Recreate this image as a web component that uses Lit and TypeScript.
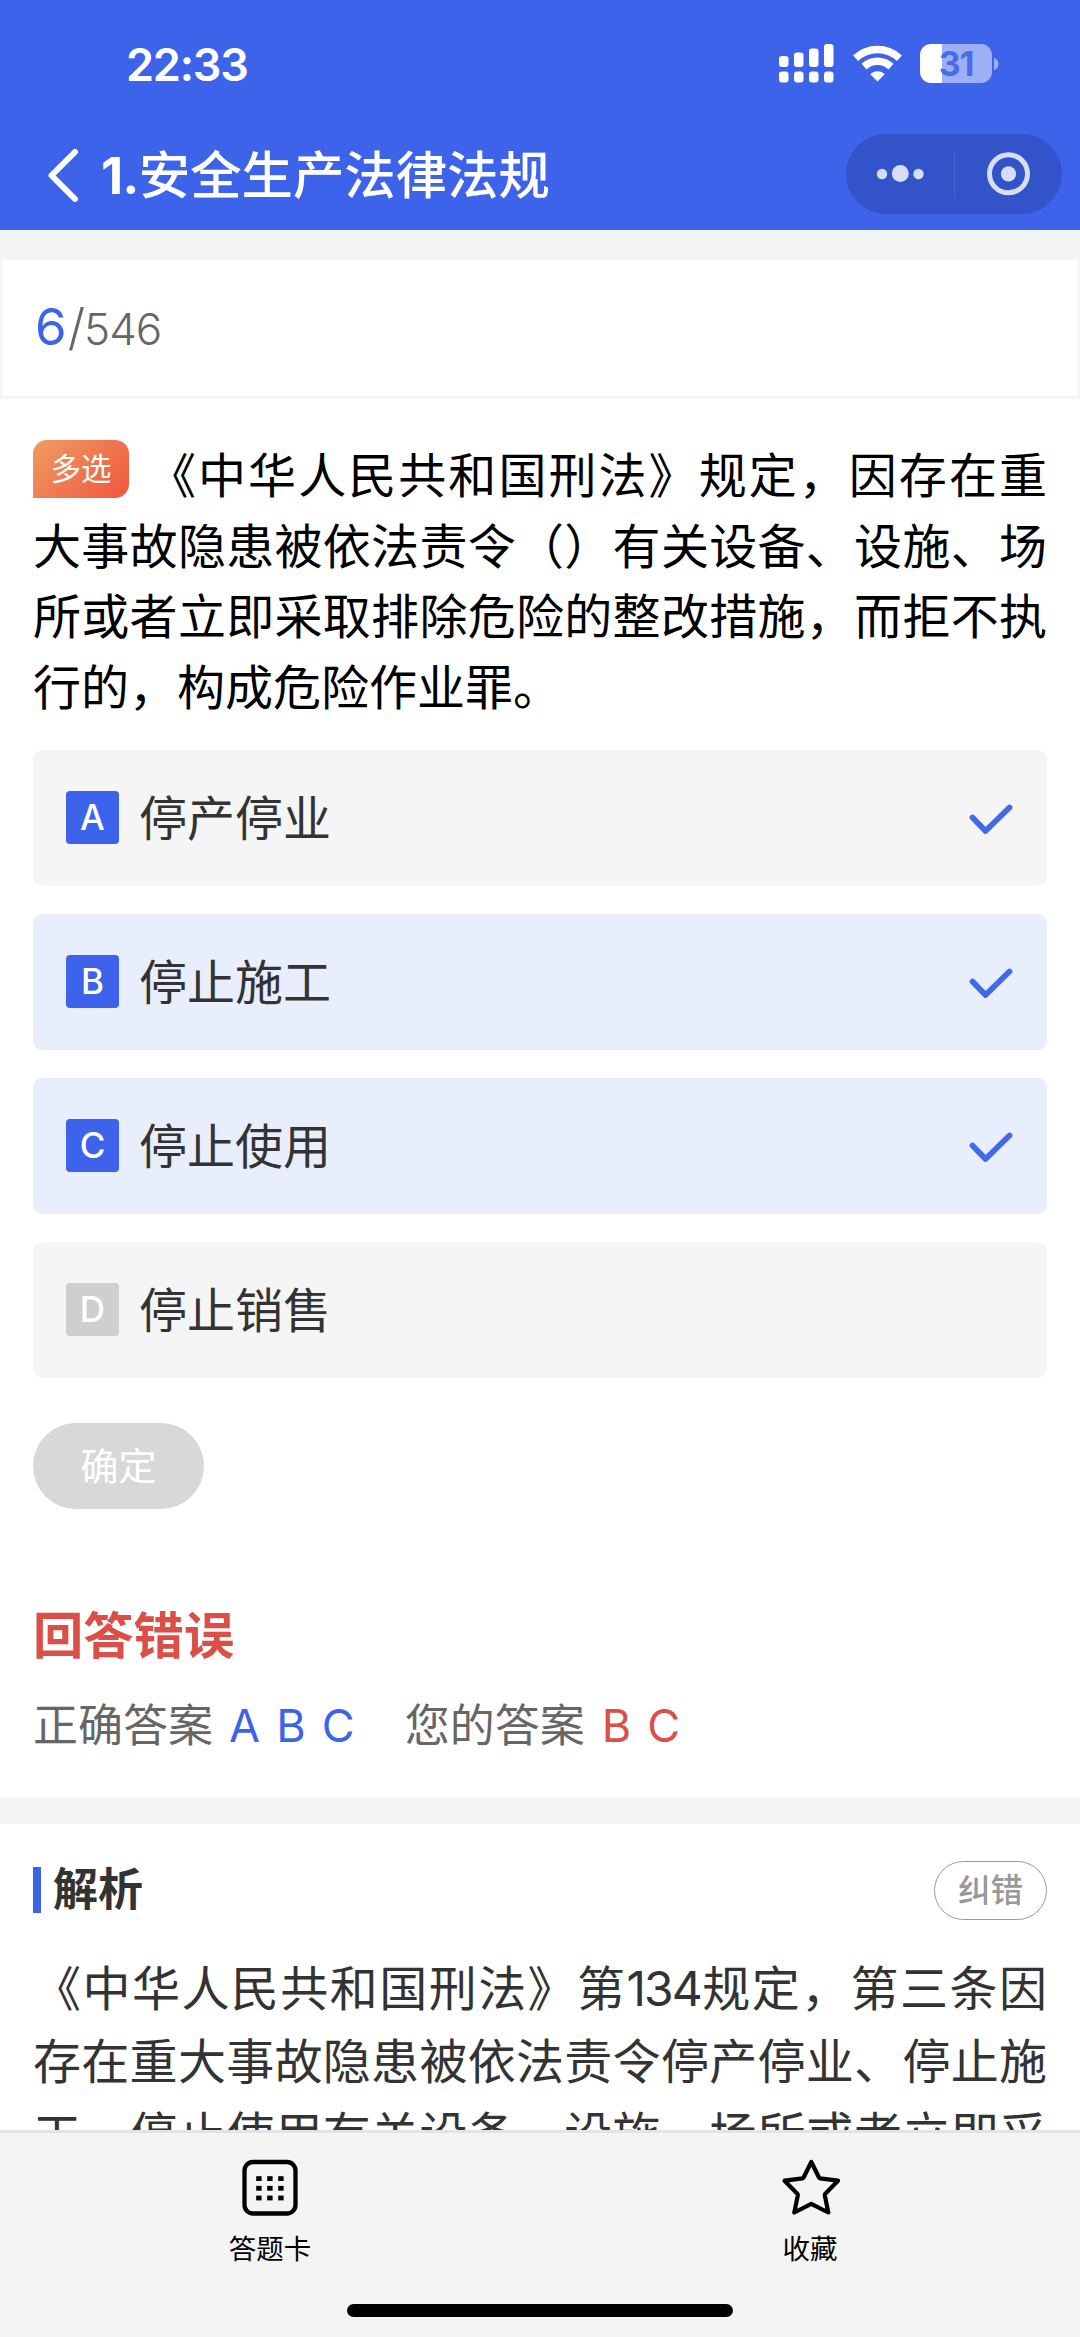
import { LitElement, html, css, svg, nothing } from "lit";
import { customElement, property } from "lit/decorators.js";
import { classMap } from "lit/directives/class-map.js";

const base = css`
  * { box-sizing: border-box; }
  :host {
    font-family: Inter, "Noto Sans CJK SC", sans-serif;
    text-spacing-trim: space-all;
  }
  svg { display: block; }
`;

@customElement("status-bar")
class StatusBar extends LitElement {
  static styles = [base, css`
    :host { display: flex; height: 127px; padding: 0 81px 0 126px; align-items: center; justify-content: space-between; color: #fff; }
    .time { font-size: 45px; font-weight: 600; line-height: 50px; letter-spacing: -1.2px; padding-top: 2px; }
    .icons { display: flex; align-items: center; }
    .wifi { margin-left: 18px; }
    .battery { margin-left: 18px; display: flex; align-items: center; }
    .cell { width: 72px; height: 39px; border-radius: 11px; display: flex; align-items: center; justify-content: center;
      background: linear-gradient(90deg, #fff 22px, #9db0f6 22px); color: #4a6bec; font-size: 34px; font-weight: 700; letter-spacing: -1px; line-height: 39px; }
  `];
  render() {
    const bars = [[0, 12, 11], [15, 8.5, 14.5], [30, 4.5, 18.5], [45, 0, 23]];
    return html`
      <div class="time">22:33</div>
      <div class="icons">
        <svg width="56" height="39" viewBox="0 0 56 39" fill="#fff">
          ${bars.map(([x, y, h]) => svg`<rect x=${x} y=${y} width="9.500" height=${h} rx="3"/><rect x=${x} y="27.5" width="9.500" height="11" rx="3"/>`)}
        </svg>
        <svg class="wifi" width="49" height="39" viewBox="0 0 49 39" fill="none" stroke="#fff" stroke-width="7.5">
          <path d="M2.6 14.2C15 2.6 34 2.6 46.400 14.2"/>
          <path d="M11 22.600C19 15.600 30 15.600 38 22.600"/>
          <path d="M24.500 37.500L17.300 30.200C21.200 26.200 27.800 26.200 31.700 30.200Z" fill="#fff" stroke="none"/>
        </svg>
        <div class="battery">
          <div class="cell">31</div>
          <svg width="7" height="12" viewBox="0 0 7 12" fill="#9db0f6"><path d="M2 0Q6.500 1.500 6.500 6T2 12Z"/></svg>
        </div>
      </div>`;
  }
}

@customElement("nav-bar")
class NavBar extends LitElement {
  @property() heading = "";
  static styles = [base, css`
    :host { display: flex; height: 103px; padding: 7px 18px 0 47px; align-items: flex-start; color: #fff; }
    .back { margin-top: 14px; }
    .title { flex: 1; margin-left: 21px; font-size: 51.400px; font-weight: 500; line-height: 80px; padding-top: 1px; white-space: nowrap; }
    .num { font-weight: 700; letter-spacing: -0.8px; }
    .capsule { display: flex; width: 216px; height: 80px; border-radius: 40px; background: #3353c9; }
  `];
  render() {
    const dot = this.heading.indexOf(".") + 1;
    return html`
      <svg class="back" width="33" height="55" viewBox="0 0 33 55" fill="none" stroke="#fff" stroke-width="6" stroke-linecap="round" stroke-linejoin="round">
        <path d="M28 4L4.500 27.500L28 51"/>
      </svg>
      <div class="title"><span class="num">${this.heading.slice(0, dot)}</span>${this.heading.slice(dot)}</div>
      <div class="capsule">
        <svg width="216" height="80" viewBox="0 0 216 80">
          <g fill="#d6ddf6"><circle cx="36" cy="40" r="5.200"/><circle cx="54.300" cy="39.500" r="8.500"/><circle cx="72.500" cy="40" r="5.200"/><circle cx="162.500" cy="39.800" r="7.600"/></g>
          <path d="M108.500 15V65" stroke="#4964cf"/>
          <circle cx="162.500" cy="39.800" r="19" fill="none" stroke="#d6ddf6" stroke-width="5"/>
        </svg>
      </div>`;
  }
}

@customElement("option-row")
class OptionRow extends LitElement {
  @property() letter = "";
  @property() label = "";
  @property({ type: Boolean }) correct = false;
  @property({ type: Boolean }) chosen = false;
  static styles = [base, css`
    :host { display: block; }
    .row { display: flex; align-items: center; height: 136px; border-radius: 9px; padding: 0 34px 0 33px; background: #f5f5f5; }
    .chosen { background: #e9eefd; }
    .tile { width: 53px; height: 53px; border-radius: 4px; background: #cfcfcf; color: #fff; font-size: 35px; font-weight: 500; line-height: 53px; text-align: center; }
    .correct { background: #3d63eb; }
    .text { flex: 1; margin-left: 20px; padding-top: 2px; font-size: 48px; line-height: 60px; color: #333; }
  `];
  render() {
    return html`
      <div class=${classMap({ row: true, chosen: this.chosen })}>
        <div class=${classMap({ tile: true, correct: this.correct })}>${this.letter}</div>
        <div class="text">${this.label}</div>
        ${this.correct ? html`<svg width="44" height="32" viewBox="0 0 44 32" fill="none" stroke="#4169ea" stroke-width="5.800" stroke-linecap="round" stroke-linejoin="round"><path d="M3.500 15.500L16.500 29L40.500 5.500"/></svg>` : nothing}
      </div>`;
  }
}

@customElement("tab-bar")
class TabBar extends LitElement {
  static styles = [base, css`
    :host { display: flex; flex-direction: column; align-items: center; height: 207px; background: #f4f4f4; border-top: 3px solid #e3e3e3; flex: none; }
    .tabs { display: flex; align-self: stretch; height: 171px; }
    .tab { flex: 1; display: flex; flex-direction: column; align-items: center; padding-top: 25px; font-size: 27.500px; line-height: 34px; color: #000; }
    .tab span { margin-top: 14px; }
    .home { width: 386px; height: 13px; border-radius: 7px; background: #000; }
  `];
  render() {
    const steps = [0, 1, 2];
    return html`
      <div class="tabs">
        <div class="tab">
          <svg width="60" height="60" viewBox="0 0 60 60">
            <rect x="4.500" y="4" width="51" height="51.500" rx="8.500" fill="none" stroke="#000" stroke-width="4.300"/>
            ${steps.map(r => steps.map(c => svg`<rect x=${16.2 + c * 11} y=${18.2 + r * 9.700} width="5.400" height="4.800"/>`))}
          </svg>
          <span>答题卡</span>
        </div>
        <div class="tab">
          <svg width="60" height="60" viewBox="0 0 60 60" fill="none" stroke="#000" stroke-width="4.200" stroke-linejoin="round">
            <path d="M31.300 4L39 19.500Q39.300 20.200 40 20.300L58 22.700L45.300 35.800Q44.700 36.400 44.800 37.300L48.300 54.500L31.300 45.800L14.300 54.500L17.800 37.300Q17.900 36.400 17.300 35.800L4.600 22.700L22.600 20.300Q23.300 20.200 23.600 19.500Z"/>
          </svg>
          <span>收藏</span>
        </div>
      </div>
      <div class="home"></div>`;
  }
}

@customElement("app-root")
class AppRoot extends LitElement {
  static styles = [base, css`
    :host { display: flex; flex-direction: column; width: 1080px; height: 2337px; background: #fff; overflow: hidden; }
    .head { background: #3d63eb; height: 230px; flex: none; }
    .scroll { flex: 1; min-height: 0; overflow: hidden; }
    .band { background: #f3f5f7; height: 27px; }
    .counter { height: 142px; border: 3px solid #f5f5f5; padding: 0 32px; display: flex; align-items: baseline; line-height: 134px; color: #666; font-size: 44px; letter-spacing: -1px; font-weight: 350; }
    .now { font-size: 51px; color: #3d63eb; font-weight: 400; margin-right: 2px; }
    .slash { font-size: 50px; font-weight: 300; }
    .question { padding: 41px 33px 0; color: #000; font-size: 48px; line-height: 70.700px; }
    .line { text-align: justify; text-align-last: justify; white-space: nowrap; position: relative; top: 1px; }
    .last { text-align-last: left; }
    .first { display: flex; gap: 19px; }
    .first .line { flex: 1; }
    .kind { width: 96px; height: 58px; border-radius: 14px 14px 14px 0; background: linear-gradient(135deg, #f09c63, #ee563d); color: #fff; font-size: 30.500px; line-height: 57px; text-align: center; }
    .options { display: flex; flex-direction: column; gap: 28px; padding: 27px 33px 0; }
    .confirm { margin: 45px 33px 0; width: 171px; height: 86px; border-radius: 43px; background: #d8d8d8; color: #fff; font-size: 38px; line-height: 86px; text-align: center; }
    .verdict { padding: 0 33px; margin-top: 97px; font-size: 50.300px; font-weight: 700; line-height: 60px; color: #dc4f48; }
    .answers { display: flex; padding: 0 33px; margin-top: 30px; height: 101px; font-size: 45px; line-height: 60px; color: #666; white-space: nowrap; }
    .mine { margin-left: 50px; }
    .good, .bad { margin-left: 16px; word-spacing: 3.500px; }
    .good { color: #3d63eb; }
    .bad { color: #dc4f48; margin-left: 17px; }
    .sub { display: flex; align-items: center; padding: 37px 33px 0; }
    .mark { width: 8px; height: 46px; background: #3d63eb; }
    .subtitle { flex: 1; margin-left: 12px; font-size: 45px; font-weight: 700; line-height: 50px; color: #333; }
    .report { width: 113px; height: 59px; border: 1px solid #999; border-radius: 30px; color: #999; font-size: 32.500px; font-weight: 500; line-height: 58px; text-align: center; }
    .explain { padding: 31px 33px 0; color: #333; font-size: 48px; line-height: 73.300px; }
    .digits { letter-spacing: -2px; }
  `];
  render() {
    return html`
      <div class="head"><status-bar></status-bar><nav-bar heading="1.安全生产法律法规"></nav-bar></div>
      <div class="scroll">
        <div class="band"></div>
        <div class="counter"><span class="now">6</span><span class="slash">/</span>546</div>
        <div class="question">
          <div class="first"><div class="kind">多选</div><div class="line">《中华人民共和国刑法》规定，因存在重</div></div>
          <div class="line">大事故隐患被依法责令（）有关设备、设施、场</div>
          <div class="line">所或者立即采取排除危险的整改措施，而拒不执</div>
          <div class="line last">行的，构成危险作业罪。</div>
        </div>
        <div class="options">
          <option-row letter="A" label="停产停业" correct></option-row>
          <option-row letter="B" label="停止施工" correct chosen></option-row>
          <option-row letter="C" label="停止使用" correct chosen></option-row>
          <option-row letter="D" label="停止销售"></option-row>
        </div>
        <div class="confirm">确定</div>
        <div class="verdict">回答错误</div>
        <div class="answers">
          <span>正确答案</span><span class="good">A B C</span>
          <span class="mine">您的答案</span><span class="bad">B C</span>
        </div>
        <div class="band"></div>
        <div class="sub"><div class="mark"></div><div class="subtitle">解析</div><div class="report">纠错</div></div>
        <div class="explain">
          <div class="line">《中华人民共和国刑法》第<span class="digits">134</span>规定，第三条因</div>
          <div class="line">存在重大事故隐患被依法责令停产停业、停止施</div>
          <div class="line">工、停止使用有关设备、设施、场所或者立即采</div>
        </div>
      </div>
      <tab-bar></tab-bar>`;
  }
}
